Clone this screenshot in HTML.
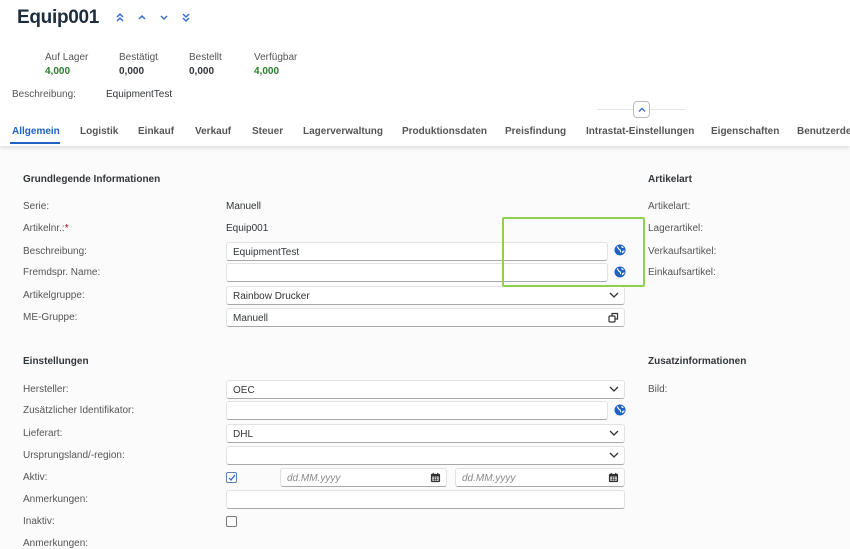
<!DOCTYPE html>
<html><head><meta charset="utf-8"><style>
*{margin:0;padding:0;box-sizing:border-box}
body{width:850px;height:547px;overflow:hidden;background:#fbfbfb;font-family:"Liberation Sans",sans-serif;color:#32363a;position:relative}
.a{position:absolute;white-space:nowrap}
.hdr{position:absolute;left:0;top:0;width:850px;height:146px;background:#fff;box-shadow:0 2px 4px rgba(0,0,0,.12)}
.lbl{font-size:10px;color:#555}
.v{font-size:10px;color:#32363a}
.tab{font-size:10px;font-weight:bold;color:#555;top:126px}
.in{position:absolute;height:19px;background:#fff;border:1px solid #e2e2e2;border-bottom:1px solid #a8a8a8;border-radius:3px;font-size:10px;padding:4px 6px;color:#32363a}
.sec{font-size:10px;font-weight:bold;color:#32363a}
.chev{position:absolute;right:5px;top:5px}
.glb{position:absolute}
.cb{position:absolute;width:11px;height:11px;border:1px solid #777;border-radius:2px;background:#fff}
</style></head><body>
<div class="hdr"></div>
<div class="a" style="left:17px;top:7px;font-size:19px;font-weight:bold;color:#1d2d3e;letter-spacing:-0.3px">Equip001</div>
<svg class="a" style="left:114px;top:12px" width="80" height="12" viewBox="0 0 80 12" fill="none" stroke="#3a6fd0" stroke-width="1.5"><path d="M3 5l3-3 3 3M3 9l3-3 3 3M25 7l3-3 3 3M47 4l3 3 3-3M69 2l3 3 3-3M69 6l3 3 3-3"/></svg>
<div class="a lbl" style="left:45px;top:52px">Auf Lager</div><div class="a" style="left:45px;top:66px;font-size:10px;font-weight:bold;color:#2b7d2b">4,000</div>
<div class="a lbl" style="left:119px;top:52px">Bestätigt</div><div class="a" style="left:119px;top:66px;font-size:10px;font-weight:bold">0,000</div>
<div class="a lbl" style="left:189px;top:52px">Bestellt</div><div class="a" style="left:189px;top:66px;font-size:10px;font-weight:bold">0,000</div>
<div class="a lbl" style="left:254px;top:52px">Verfügbar</div><div class="a" style="left:254px;top:66px;font-size:10px;font-weight:bold;color:#2b7d2b">4,000</div>
<div class="a lbl" style="left:12px;top:89px">Beschreibung:</div><div class="a v" style="left:106px;top:89px">EquipmentTest</div>
<div class="a" style="left:597px;top:109px;width:88px;height:1px;background:#e5e5e5"></div>
<div class="a" style="left:633px;top:101px;width:17px;height:17px;border:1px solid #bbb;border-radius:4px;background:#fff"><svg style="position:absolute;left:4px;top:5px" width="8" height="6" viewBox="0 0 8 6" fill="none" stroke="#3a6fd0" stroke-width="1.4"><path d="M1 4.5l3-3 3 3"/></svg></div>
<div class="a tab" style="left:12px;color:#2160c4">Allgemein</div>
<div class="a" style="left:10px;top:142px;width:50px;height:2px;background:#2160c4"></div>
<div class="a tab" style="left:80px">Logistik</div>
<div class="a tab" style="left:138px">Einkauf</div>
<div class="a tab" style="left:195px">Verkauf</div>
<div class="a tab" style="left:252px">Steuer</div>
<div class="a tab" style="left:303px">Lagerverwaltung</div>
<div class="a tab" style="left:402px">Produktionsdaten</div>
<div class="a tab" style="left:505px">Preisfindung</div>
<div class="a tab" style="left:586px">Intrastat-Einstellungen</div>
<div class="a tab" style="left:711px">Eigenschaften</div>
<div class="a tab" style="left:797px">Benutzerdefinierte</div>

<svg width="0" height="0" style="position:absolute"><defs><symbol id="g" viewBox="0 0 12 12"><circle cx="6" cy="6" r="5.5" fill="#1f5fc9"/><path d="M3 2.5c1.5 1 1 2.5 2.5 3s.5 2 1.5 2.5M8 2c-.5 1 .5 1.5 1.5 1.5M9 9c-1-1 0-2 1.5-2" stroke="#fff" stroke-width="1.2" fill="none"/></symbol>
<symbol id="c" viewBox="0 0 10 6"><path d="M1 1l4 4 4-4" stroke="#333" stroke-width="1.3" fill="none"/></symbol>
<symbol id="k" viewBox="0 0 12 12"><rect x="1" y="2" width="10" height="9" rx="1" fill="#333"/><rect x="2.5" y="5" width="7" height="4.5" fill="#fff"/><path d="M3.5 1v2.5M8.5 1v2.5" stroke="#333" stroke-width="1.3"/><path d="M3 6.5h6M3 8h6M5 5v4.5M7 5v4.5" stroke="#333" stroke-width=".7"/></symbol></defs></svg>

<div class="a sec" style="left:23px;top:174px">Grundlegende Informationen</div>
<div class="a sec" style="left:648px;top:174px">Artikelart</div>
<div class="a lbl" style="left:23px;top:201px">Serie:</div><div class="a v" style="left:226px;top:201px">Manuell</div>
<div class="a lbl" style="left:23px;top:223px">Artikelnr.:<span style="color:#b00">*</span></div><div class="a v" style="left:226px;top:223px">Equip001</div>
<div class="a lbl" style="left:23px;top:246px">Beschreibung:</div><div class="in" style="left:226px;top:242px;width:382px">EquipmentTest</div><svg class="glb" style="left:614px;top:244px" width="12" height="12"><use href="#g"/></svg>
<div class="a lbl" style="left:23px;top:267px">Fremdspr. Name:</div><div class="in" style="left:226px;top:263px;width:382px"></div><svg class="glb" style="left:614px;top:266px" width="12" height="12"><use href="#g"/></svg>
<div class="a lbl" style="left:23px;top:290px">Artikelgruppe:</div><div class="in" style="left:226px;top:286px;width:399px">Rainbow Drucker<svg class="chev" width="10" height="6"><use href="#c"/></svg></div>
<div class="a lbl" style="left:23px;top:312px">ME-Gruppe:</div><div class="in" style="left:226px;top:308px;width:399px">Manuell<svg class="chev" style="top:3px" width="11" height="11" viewBox="0 0 11 11" fill="none" stroke="#333" stroke-width="1.2"><rect x="1" y="4" width="6" height="6" rx="1"/><path d="M4 4V1.5h5.5V7H7"/></svg></div>
<div class="a lbl" style="left:648px;top:201px">Artikelart:</div>
<div class="a lbl" style="left:648px;top:223px">Lagerartikel:</div>
<div class="a lbl" style="left:648px;top:246px">Verkaufsartikel:</div>
<div class="a lbl" style="left:648px;top:267px">Einkaufsartikel:</div>
<div class="a" style="left:502px;top:217px;width:143px;height:70px;border:2px solid #8fd14f;border-radius:2px"></div>

<div class="a sec" style="left:23px;top:356px">Einstellungen</div>
<div class="a sec" style="left:648px;top:356px">Zusatzinformationen</div>
<div class="a lbl" style="left:648px;top:384px">Bild:</div>
<div class="a lbl" style="left:23px;top:384px">Hersteller:</div><div class="in" style="left:226px;top:380px;width:399px">OEC<svg class="chev" width="10" height="6"><use href="#c"/></svg></div>
<div class="a lbl" style="left:23px;top:405px">Zusätzlicher Identifikator:</div><div class="in" style="left:226px;top:401px;width:382px"></div><svg class="glb" style="left:614px;top:404px" width="12" height="12"><use href="#g"/></svg>
<div class="a lbl" style="left:23px;top:428px">Lieferart:</div><div class="in" style="left:226px;top:424px;width:399px">DHL<svg class="chev" width="10" height="6"><use href="#c"/></svg></div>
<div class="a lbl" style="left:23px;top:450px">Ursprungsland/-region:</div><div class="in" style="left:226px;top:446px;width:399px"><svg class="chev" width="10" height="6"><use href="#c"/></svg></div>
<div class="a lbl" style="left:23px;top:472px">Aktiv:</div><div class="cb" style="left:226px;top:472px;border-color:#5b7fb8"><svg style="position:absolute;left:1px;top:1px" width="8" height="8" viewBox="0 0 8 8" fill="none" stroke="#2160c4" stroke-width="1.2"><path d="M1 4l2 2 4-5"/></svg></div>
<div class="in" style="left:280px;top:468px;width:167px;font-style:italic;color:#888">dd.MM.yyyy<svg class="chev" style="top:3px" width="11" height="11"><use href="#k"/></svg></div>
<div class="in" style="left:455px;top:468px;width:170px;font-style:italic;color:#888">dd.MM.yyyy<svg class="chev" style="top:3px" width="11" height="11"><use href="#k"/></svg></div>
<div class="a lbl" style="left:23px;top:494px">Anmerkungen:</div><div class="in" style="left:226px;top:490px;width:399px"></div>
<div class="a lbl" style="left:23px;top:516px">Inaktiv:</div><div class="cb" style="left:226px;top:516px"></div>
<div class="a lbl" style="left:23px;top:538px">Anmerkungen:</div>
</body></html>
